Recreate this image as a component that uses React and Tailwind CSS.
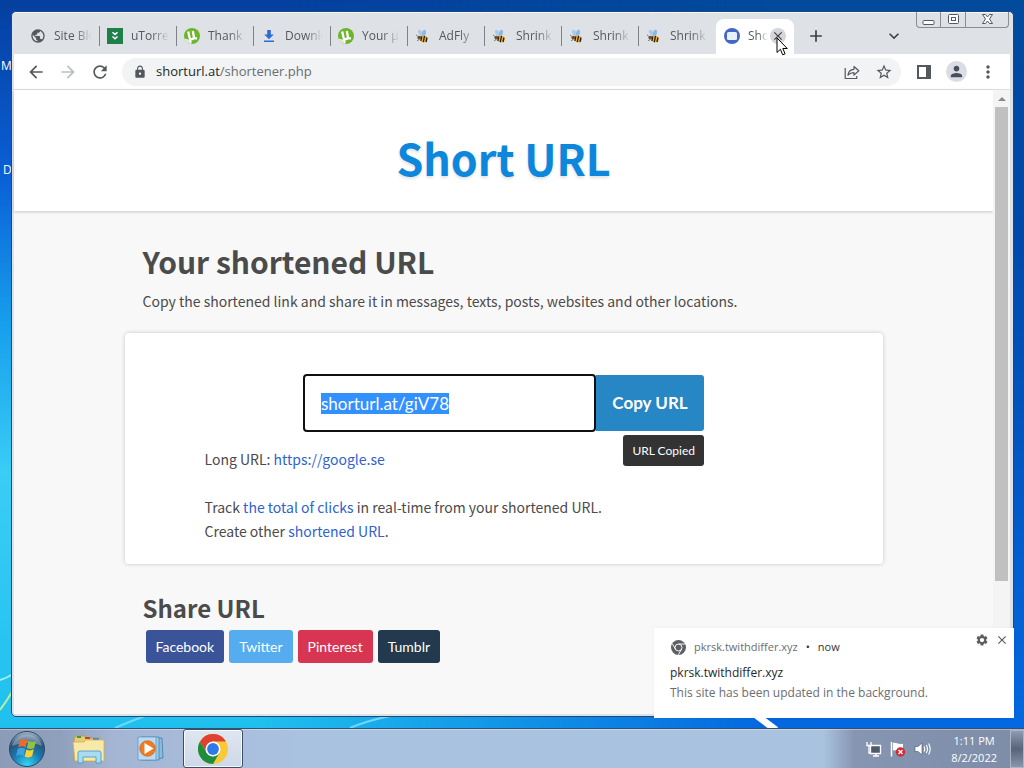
import { useEffect, useRef } from "react";
import {
  MdAdd,
  MdArrowBack,
  MdArrowForward,
  MdClose,
  MdExpandMore,
  MdLock,
  MdMoreVert,
  MdPerson,
  MdPublic,
  MdRefresh,
  MdSettings,
  MdStarBorder,
} from "react-icons/md";

function UtorrentIcon() {
  return (
    <svg viewBox="0 0 16 16" className="size-4">
      <circle cx="8" cy="8" r="8" fill="#6cb52d" />
      <path d="M.4 10.600A8 8 0 0 0 6.800 16l-.9-4.200z" fill="#dfe8d6" />
      <path
        d="M4.200 3.600l1.200 5.400c.4 1.800 1.400 2.500 2.700 2.200 1.500-.3 2.100-1.400 1.700-3L8.800 3M9.700 8.400c.4 1.700 1.500 2.300 3.200 1.800"
        fill="none"
        stroke="#fff"
        strokeWidth="2.300"
      />
      <path d="M4.800 8.500l1.200 7 1.700-.2-.6-4z" fill="#fff" />
    </svg>
  );
}

function GreenChevrons() {
  return (
    <svg viewBox="0 0 16 16" className="size-4">
      <path d="M0 0h16v16H0z" fill="#1f7f49" />
      <path d="M5.500 4.200L8 6.400l2.500-2.200M5.500 8.500L8 10.700l2.500-2.200" fill="none" stroke="#fff" strokeWidth="1.500" />
    </svg>
  );
}

function DownloadIcon() {
  return (
    <svg viewBox="0 0 16 16" className="size-4" fill="#2b6cd4">
      <path d="M6.200 2h3.600v4.500h3L8 11.200 3.200 6.500h3zM3 12.500h10V14H3z" />
    </svg>
  );
}

function BeeIcon() {
  return (
    <svg viewBox="0 0 16 16" className="size-4">
      <ellipse cx="5.500" cy="4.800" rx="2" ry="3.400" transform="rotate(-35 5.500 4.800)" fill="#a9cbea" />
      <ellipse cx="9" cy="5" rx="1.900" ry="3.200" transform="rotate(12 9 5)" fill="#8db8e4" />
      <ellipse cx="9" cy="11" rx="4" ry="3.300" transform="rotate(18 9 11)" fill="#eeb33c" />
      <path d="M6.800 8.300l-.9 4.700M9.600 8L8.200 14.200M11.900 9.500l-.9 4.500" stroke="#2a2014" strokeWidth="1.300" />
      <circle cx="4.300" cy="9.600" r="1.900" fill="#66522f" />
      <path d="M2.500 8L1.200 7M3.500 11.500l-1 1.500" stroke="#2a2014" strokeWidth=".7" />
    </svg>
  );
}

function ShortUrlIcon() {
  return (
    <svg viewBox="0 0 16 16" className="size-4">
      <circle cx="8" cy="8" r="8" fill="#4666c4" />
      <rect x="3" y="4" width="10" height="8" rx="1.500" fill="#e6f0ff" />
    </svg>
  );
}

const TABS = [
  { id: 1, title: "Site Blo", icon: <MdPublic className="size-4 text-[#55595d]" /> },
  { id: 2, title: "uTorren", icon: <GreenChevrons /> },
  { id: 3, title: "Thank", icon: <UtorrentIcon /> },
  { id: 4, title: "Downlo", icon: <DownloadIcon /> },
  { id: 5, title: "Your µT", icon: <UtorrentIcon /> },
  { id: 6, title: "AdFly", icon: <BeeIcon /> },
  { id: 7, title: "Shrink", icon: <BeeIcon /> },
  { id: 8, title: "Shrink", icon: <BeeIcon /> },
  { id: 9, title: "Shrink", icon: <BeeIcon /> },
];

function WindowButtons() {
  const base = "flex h-4 items-center justify-center border-[#8a8d92]";
  return (
    <div className="mr-1 -mt-px flex h-[17px] self-start rounded-b border border-t-0 border-[#8a8d92]">
      <button aria-label="Minimize" className={base + " w-6 border-r"}>
        <svg viewBox="0 0 13 13" className="size-[13px]">
          <rect x="1" y="7.500" width="11" height="4" rx="1" fill="#fff" stroke="#555a62" />
        </svg>
      </button>
      <button aria-label="Restore" className={base + " w-[25px] border-r"}>
        <svg viewBox="0 0 13 13" className="size-[13px]" fill="#fff" stroke="#555a62">
          <rect x="1.500" y="1.500" width="10" height="9" rx="1" />
          <rect x="4.500" y="4.500" width="4" height="3" />
        </svg>
      </button>
      <button aria-label="Close window" className={base + " w-[42px]"}>
        <svg viewBox="0 0 13 13" className="size-[13px]">
          <path
            d="M1.500 1.500h3l2 2.500 2-2.500h3L8.500 6l3 4.500h-3l-2-2.500-2 2.500h-3L4.500 6z"
            fill="#fff"
            stroke="#555a62"
          />
        </svg>
      </button>
    </div>
  );
}

function TabStrip() {
  return (
    <div className="flex h-[42px] items-end pl-[11px] text-xs text-[#55595e]">
      {TABS.map((t) => (
        <div key={t.id} className="flex h-9 w-[77px] shrink items-center">
          <button className="flex min-w-0 flex-1 items-center gap-2 overflow-hidden pl-[7px] text-left">
            <span className="shrink-0">{t.icon}</span>
            <span className="w-[38px] overflow-hidden whitespace-nowrap [mask-image:linear-gradient(to_right,black_55%,transparent)]">
              {t.title}
            </span>
          </button>
          {t.id !== 9 && <span className="h-5 w-px shrink-0 bg-[#7f8389]" />}
        </div>
      ))}
      <div className="relative flex h-[35px] w-[78px] items-center gap-2 rounded-t-lg bg-white pb-px pl-2">
        <ShortUrlIcon />
        <span className="w-5 overflow-hidden whitespace-nowrap [mask-image:linear-gradient(to_right,black_50%,transparent)]">
          Short
        </span>
        <button
          aria-label="Close tab"
          className="absolute right-2 flex size-4 items-center justify-center rounded-full bg-[#d5d6d8] text-[#3c4043]"
        >
          <MdClose className="size-[14px]" />
        </button>
        <svg viewBox="0 0 12 19" className="absolute top-[18px] left-[60px] z-10 h-[19px] w-3">
          <path d="M1 1v14.500l3.400-3.200 2.300 5.500 2.400-1-2.300-5.300h4.500z" fill="#fff" stroke="#000" />
        </svg>
      </div>
      <button aria-label="New tab" className="ml-3 flex h-9 items-center text-[#3c4043]">
        <MdAdd className="size-5" />
      </button>
      <div className="flex-1" />
      <button aria-label="Search tabs" className="mr-3 flex h-9 items-center text-[#3c4043]">
        <MdExpandMore className="size-5" />
      </button>
      <WindowButtons />
    </div>
  );
}

function Toolbar() {
  return (
    <div className="flex h-9 items-center border-b border-[#dcdee1] bg-white pr-3 pl-3 text-[#54585c]">
      <button aria-label="Back" className="mr-3">
        <MdArrowBack className="size-5" />
      </button>
      <button aria-label="Forward" className="mr-3 text-[#bcbfc2]">
        <MdArrowForward className="size-5" />
      </button>
      <button aria-label="Reload" className="mr-3">
        <MdRefresh className="size-5" />
      </button>
      <div className="flex h-7 min-w-0 flex-1 items-center rounded-full bg-[#f1f3f4] pr-2 pl-[11px]">
        <MdLock className="mr-[9px] size-[14px] shrink-0" />
        <span className="min-w-0 flex-1 truncate text-[13px] text-[#696d72]">
          <span className="text-[#24272a]">shorturl.at</span>/shortener.php
        </span>
        <button aria-label="Share this page" className="mr-[14px]">
          <svg viewBox="0 0 18 18" className="size-[18px]" fill="none" stroke="currentColor" strokeWidth="1.200">
            <path d="M2.200 5v10.500h11.500V13" />
            <path d="M5 12.200c.3-3.600 2.400-5.700 6-5.900V3.500l4.800 4.300-4.800 4.300V9.600C8.500 9.600 6.500 10.400 5 12.200z" strokeLinejoin="round" />
          </svg>
        </button>
        <button aria-label="Bookmark this tab">
          <MdStarBorder className="size-[18px]" />
        </button>
      </div>
      <button aria-label="Side panel" className="ml-4">
        <svg viewBox="0 0 14 14" className="size-[14px]">
          <path d="M1 1h12v12H1z" fill="#fff" stroke="currentColor" strokeWidth="2" />
          <path d="M9 1h4v12H9z" fill="currentColor" />
        </svg>
      </button>
      <button
        aria-label="Profile"
        className="ml-[15px] flex size-[21px] items-center justify-center rounded-full bg-[#dadde3] text-[#4a5058]"
      >
        <MdPerson className="size-[17px]" />
      </button>
      <button aria-label="Menu" className="ml-[11px]">
        <MdMoreVert className="size-5" />
      </button>
    </div>
  );
}

const SHARES = [
  { name: "Facebook", style: "bg-[#3b5499]" },
  { name: "Twitter", style: "bg-[#55acee]" },
  { name: "Pinterest", style: "bg-[#d73552]" },
  { name: "Tumblr", style: "bg-[#23394d]" },
];

function ShortenerPage() {
  const field = useRef(null);
  useEffect(() => {
    field.current.focus();
    field.current.select();
  }, []);
  return (
    <main className="min-w-0 flex-1 bg-[#f8f8f8] font-['Noto_Sans_CJK_SC',sans-serif] text-[#4b4b4b]">
      <header className="flex h-[121px] items-center justify-center bg-white pt-3 shadow-[0_1px_3px_rgba(0,0,0,0.2)]">
        <h1 className="text-[43px] leading-[60px] font-bold text-[#0d87dc] [text-shadow:0_2px_3px_rgba(0,0,0,0.12)]">
          Short URL
        </h1>
      </header>
      <div className="mx-auto max-w-[758px] pt-[26px]">
        <div className="px-[18px]">
          <h2 className="text-[30px] leading-[48px] font-bold">Your shortened URL</h2>
          <p className="pt-1 text-sm leading-6">
            Copy the shortened link and share it in messages, texts, posts, websites and other locations.
          </p>
        </div>
        <section className="mt-5 rounded-sm bg-white px-20 pt-[41px] pb-[21px] shadow-[0_0_4px_rgba(0,0,0,0.2)]">
          <div className="relative mx-auto flex w-[401px] max-w-full font-['Lato',sans-serif]">
            <input
              ref={field}
              readOnly
              aria-label="Shortened URL"
              defaultValue="shorturl.at/giV78"
              className="h-[58px] min-w-0 flex-1 rounded border-2 border-[#101010] bg-white px-4 text-[17px] text-[#333] outline-none selection:bg-[#3390ff] selection:text-white"
            />
            <button className="my-px w-[108px] rounded-r-[3px] bg-[#2786c4] text-[17px] font-bold text-white">
              Copy URL
            </button>
            <div
              role="status"
              className="absolute top-[61px] right-0 rounded-[3px] bg-[#333] px-[9px] text-xs leading-[31px] text-white"
            >
              URL Copied
            </div>
          </div>
          <p className="mt-[15px] text-sm leading-6">
            Long URL:{" "}
            <a href="https://google.se" className="text-[#2f62cf]">
              https://google.se
            </a>
          </p>
          <p className="mt-6 text-sm leading-6">
            Track{" "}
            <a href="#clicks" className="text-[#2f62cf]">
              the total of clicks
            </a>{" "}
            in real-time from your shortened URL.
            <br />
            Create other{" "}
            <a href="#create" className="text-[#2f62cf]">
              shortened URL
            </a>
            .
          </p>
        </section>
        <div className="px-[18px] pt-[26px]">
          <h3 className="text-2xl leading-9 font-bold">Share URL</h3>
          <div className="mt-1 flex gap-[5px] pl-[3px] font-['Lato',sans-serif] text-sm leading-[33px] text-white">
            {SHARES.map((s) => (
              <a key={s.name} href="#share" className={"rounded-[3px] px-[10px] " + s.style}>
                {s.name}
              </a>
            ))}
          </div>
        </div>
      </div>
    </main>
  );
}

function ScrollBar() {
  return (
    <div className="flex w-[17px] flex-col items-center bg-[#f4f4f4]">
      <svg viewBox="0 0 17 17" className="size-[17px]" fill="#8b8b8b">
        <path d="M5 11h8L9 7z" />
      </svg>
      <div className="w-full flex-1 px-[2px]">
        <div className="h-4/5 bg-[#c0c0c0]" />
      </div>
      <div className="h-[14px]" />
    </div>
  );
}

function Notification() {
  return (
    <aside className="absolute right-[10px] bottom-[10px] z-20 h-[90px] w-[360px] bg-white pt-[10px] pl-4 text-xs text-[#6b6e72] shadow-[0_0_3px_rgba(0,0,0,0.06)]">
      <div className="flex h-[18px] items-center text-[11px]">
        <svg viewBox="0 0 16 16" className="mr-2 ml-px size-[15px]">
          <circle cx="8" cy="8" r="8" fill="#5c5f63" />
          <circle cx="8" cy="8" r="3.700" fill="none" stroke="#fff" />
          <path d="M8 4.300h7M4.800 9.800L1.300 3.900M11.200 9.800L7.800 15.800" stroke="#fff" />
        </svg>
        <span>pkrsk.twithdiffer.xyz</span>
        <span className="mx-2 text-[#333]">•</span>
        <span className="text-[#333]">now</span>
      </div>
      <div className="mt-2 leading-[18px] text-[#26282b]">pkrsk.twithdiffer.xyz</div>
      <div className="mt-px leading-5">This site has been updated in the background.</div>
      <div className="absolute top-[5px] right-[5px] flex gap-[6px] text-[#5a5d61]">
        <button aria-label="Notification settings">
          <MdSettings className="size-[14px]" />
        </button>
        <button aria-label="Dismiss notification">
          <MdClose className="size-[14px]" />
        </button>
      </div>
    </aside>
  );
}

function StartOrb() {
  return (
    <svg viewBox="0 0 38 38" className="size-[38px]">
      <defs>
        <radialGradient id="orb" cx=".5" cy=".95" r=".95">
          <stop offset="0" stopColor="#35d6f6" />
          <stop offset=".45" stopColor="#1878ae" />
          <stop offset=".75" stopColor="#2b5277" />
          <stop offset="1" stopColor="#a8bccb" />
        </radialGradient>
      </defs>
      <circle cx="19" cy="19" r="17.500" fill="url(#orb)" stroke="#264a66" />
      <path d="M4 16a15.500 15.500 0 0 1 30 0c-8-4-21-4-30 0z" fill="#fff" opacity=".3" />
      <path d="M12 10.500c2.500-1.600 4.800-1.500 7.300-.1l-1.700 7c-2.500-1.400-4.800-1.500-7.400.1z" fill="#ef6a2b" />
      <path d="M20.500 11c2.500 1.400 4.900 1.400 7.500-.1l-1.800 7c-2.500 1.500-4.900 1.500-7.400.1z" fill="#8cc63f" />
      <path d="M9.800 18.900c2.600-1.600 4.900-1.500 7.400-.1l-1.700 7c-2.500-1.400-4.800-1.500-7.400.1z" fill="#3fa2e0" />
      <path d="M18.400 19.400c2.500 1.400 4.900 1.400 7.400-.1l-1.700 7c-2.500 1.500-4.900 1.500-7.400.1z" fill="#fbd02f" />
    </svg>
  );
}

function ExplorerIcon() {
  return (
    <svg viewBox="0 0 34 30" className="h-[30px] w-[34px]">
      <path d="M2 5l2-3h9l1 2h14l2 3v20H2z" fill="#e8cb74" stroke="#b9963b" strokeWidth=".8" />
      <path d="M5 2h4v2H5z" fill="#3d9a3d" />
      <path d="M13 3h5v2h-5z" fill="#c8432f" />
      <path d="M21 4h6v2h-6z" fill="#4b86cf" />
      <path d="M1 8h11l2-2h18v21H3z" fill="#f8e9a8" stroke="#cdb05a" strokeWidth=".8" />
      <path d="M6 29V19q0-2 2-2h19q2 0 2 2v10h-5v-6H11v6z" fill="#a8dcf2" stroke="#4e9cc6" strokeWidth=".9" />
    </svg>
  );
}

function MediaIcon() {
  return (
    <svg viewBox="0 0 28 26" className="h-[26px] w-7">
      <path d="M8 2h17l1 20-17 2z" fill="#8fbbd9" stroke="#3f7fae" strokeWidth=".8" />
      <path d="M4 1h18v23H4z" fill="#a3cbe6" stroke="#4384b2" strokeWidth=".8" />
      <path d="M1 1h18v23H1z" fill="#bcdaf0" stroke="#5b9ac4" strokeWidth=".8" />
      <circle cx="10.500" cy="12.500" r="7.800" fill="#ee7c25" stroke="#c75a12" strokeWidth=".6" />
      <path d="M7.500 7v11l9-5.500z" fill="#fff" />
    </svg>
  );
}

function ChromeIcon() {
  return (
    <svg viewBox="0 0 30 30" className="size-[30px]">
      <circle cx="15" cy="15" r="15" fill="#fcc934" />
      <path d="M2 7.500A15 15 0 0 1 28 7.500H15L8.500 18.700z" fill="#e0402f" />
      <path d="M2 7.500A15 15 0 0 0 15 30l6.500-11.200L15 22.500 8.500 18.700z" fill="#1e8e3e" />
      <circle cx="15" cy="15" r="7.500" fill="#fff" />
      <circle cx="15" cy="15" r="5.900" fill="#2f78e8" />
    </svg>
  );
}

function Tray() {
  return (
    <div className="flex items-center gap-2">
      <svg viewBox="0 0 16 16" className="size-4">
        <path d="M4.500 4.500h10v8h-10z" fill="#4f5a6b" stroke="#fff" strokeWidth="1.300" />
        <path d="M7 15h6M10 12.500V15M1 1v3.500h4V1M3 4v8h1.500" fill="none" stroke="#fff" strokeWidth="1.300" />
      </svg>
      <svg viewBox="0 0 16 16" className="size-4">
        <path d="M1.500 1v14.500" stroke="#fff" strokeWidth="1.500" />
        <path d="M3 2c4-1 5 2 10 .8v7C9 11 7 8.500 3 9.500z" fill="#fff" />
        <circle cx="10.500" cy="11" r="4.700" fill="#cf2b36" />
        <path d="M8.500 9l4 4M12.500 9l-4 4" stroke="#fff" strokeWidth="1.400" />
      </svg>
      <svg viewBox="0 0 17 16" className="h-4 w-[17px]">
        <path d="M1 5.500h3L8 2v12l-4-3.500H1z" fill="#fff" stroke="#46536a" strokeWidth=".6" />
        <path d="M10 5.500q1.500 2.500 0 5M12.300 4q2.400 4 0 8M14.600 2.500q3.200 5.500 0 11" fill="none" stroke="#fff" strokeWidth="1.100" />
      </svg>
    </div>
  );
}

function Taskbar() {
  return (
    <footer className="flex h-10 items-center border-t border-[#34506e] bg-[linear-gradient(to_right,#8b9bb8_0,#8fa0bd_60px,#a3b5d2_110px,#a9bfdd_240px,#a9c2df_300px,#a9c2df_calc(100%-200px),#8696b2_calc(100%-170px),#7d8ca7_100%)] shadow-[inset_0_1px_0_rgba(255,255,255,0.35)]">
      <button aria-label="Start" className="ml-2">
        <StartOrb />
      </button>
      <button aria-label="Windows Explorer" className="ml-[26px]">
        <ExplorerIcon />
      </button>
      <button aria-label="Media Player" className="ml-[31px]">
        <MediaIcon />
      </button>
      <button
        aria-label="Google Chrome"
        className="ml-[18px] flex h-[39px] w-[60px] items-center justify-center rounded-[3px] border border-[#39506b] bg-linear-to-b from-[#dfe6f0] to-[#cdd8e8] shadow-[inset_0_0_0_1px_rgba(255,255,255,0.8)]"
      >
        <ChromeIcon />
      </button>
      <div className="flex-1" />
      <Tray />
      <div className="mr-[13px] ml-5 text-center text-[11px] leading-[17px] text-white">
        <div>1:11 PM</div>
        <div>8/2/2022</div>
      </div>
      <button
        aria-label="Show desktop"
        className="h-[38px] w-[14px] border border-[#a9b6ca] bg-linear-to-b from-[#8e9bb1] via-[#57647a] to-[#8895ab]"
      />
    </footer>
  );
}

export default function App() {
  return (
    <div className="flex min-h-screen flex-col overflow-hidden font-['Open_Sans',sans-serif]">
      <div className="relative flex flex-1 bg-[linear-gradient(#014a9c,#0048a8_30%,#0468e0)] pt-[11px] pr-[10px] pb-[11px] pl-[11px]">
        <div className="absolute inset-0 bg-[linear-gradient(#053f9f,#0a5fd6_24%,#17a0ec_45%,#3acdf6_65%,#1fc0ee)] [mask-image:linear-gradient(to_right,black_25%,transparent_75%)]" />
        <svg className="absolute bottom-0 left-0 h-[60px] w-full" fill="none">
          <path d="M0 12q7-2 13-6" stroke="#a5ecf8" strokeWidth="2" />
          <path d="M0 42q6-8 12-18" stroke="#b8ee9c" strokeWidth="2" />
          <path d="M115 60q16-7 30-12M350 60q16-7 40-12" stroke="#6fd8fa" strokeWidth="2" />
          <path d="M752 44l24 18" stroke="#fff" strokeWidth="7" />
        </svg>
        <div className="absolute top-[60px] left-px text-xs leading-3 text-white">M</div>
        <div className="absolute top-[164px] left-[3px] text-xs leading-3 text-white">D</div>
        <div className="relative flex min-w-0 flex-1 flex-col overflow-hidden rounded-[5px] border border-[#1c4a7a] bg-[#dee1e6] shadow-[inset_0_1px_0_#f4f6f8]">
          <TabStrip />
          <div className="mr-[3px] mb-[2px] ml-[2px] flex flex-1 flex-col">
            <Toolbar />
            <div className="flex flex-1">
              <ShortenerPage />
              <ScrollBar />
            </div>
          </div>
        </div>
        <Notification />
      </div>
      <Taskbar />
    </div>
  );
}
